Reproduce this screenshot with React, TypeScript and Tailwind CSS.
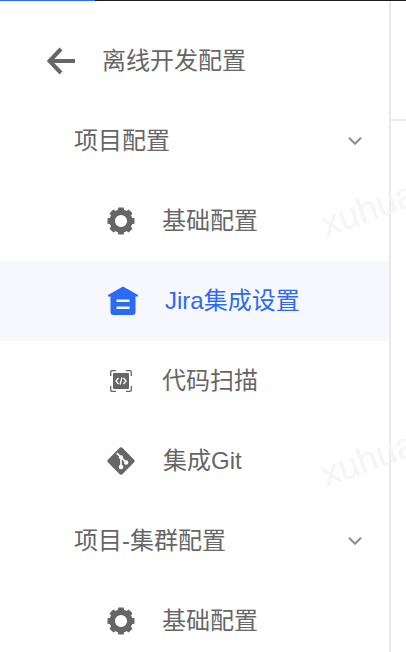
import { ChevronDown } from 'lucide-react'

const font = '[font-family:"Liberation_Sans","Noto_Sans_CJK_SC",sans-serif]'
const teeth = [0, 45, 90, 135, 180, 225, 270, 315]

function GearIcon() {
  return (
    <svg width="30" height="30" viewBox="0 0 30 30" fill="#666666">
      {teeth.map((deg) => (
        <path key={deg} d="M12.300 1.500h5.400l.8 5h-7z" transform={`rotate(${deg} 15 15)`} />
      ))}
      <circle cx="15" cy="15" r="8.800" fill="none" stroke="#666666" strokeWidth="5.400" />
    </svg>
  )
}

function HomeIcon() {
  return (
    <svg width="32" height="30" viewBox="0 0 32 30">
      <path
        fill="#2b6af5"
        fillRule="evenodd"
        d="M16 .5 31 9v1.500h-2.500V26a3 3 0 0 1-3 3h-19a3 3 0 0 1-3-3V10.500H1V9zM9.500 13.500v2.500h13v-2.500zm0 7v2.500h13v-2.500z"
      />
    </svg>
  )
}

function ScanIcon() {
  return (
    <svg width="22" height="22" viewBox="0 0 22 22" fill="none">
      <path
        stroke="#666666"
        strokeWidth="1.300"
        d="M.7 6V2A1.300 1.300 0 0 1 2 .7h4M16 .7h4A1.300 1.300 0 0 1 21.300 2v4M21.300 16v4a1.300 1.300 0 0 1-1.300 1.300h-4M6 21.300H2A1.300 1.300 0 0 1 .7 20v-4"
      />
      <rect x="3" y="3" width="16" height="16" rx="1" fill="#666666" />
      <path stroke="#ffffff" strokeWidth="1.300" d="m8.500 8-2.500 3 2.500 3M13.500 8l2.500 3-2.500 3M12 7.500l-2 7" />
    </svg>
  )
}

function GitIcon() {
  return (
    <svg width="28" height="28" viewBox="0 0 30 30">
      <path
        fill="#666666"
        d="M13.300 1.200a2.400 2.400 0 0 1 3.400 0l12.100 12.100a2.400 2.400 0 0 1 0 3.400L16.700 28.800a2.400 2.400 0 0 1-3.400 0L1.200 16.700a2.400 2.400 0 0 1 0-3.400z"
      />
      <path stroke="#ffffff" strokeWidth="1.800" fill="none" d="M10.500 6.500 15 11v11M15 11l5.500 5.500" />
      <circle cx="15" cy="11" r="2.200" fill="#ffffff" />
      <circle cx="15" cy="21.500" r="2.400" fill="#ffffff" />
      <circle cx="20.500" cy="16.500" r="2.400" fill="#ffffff" />
    </svg>
  )
}

function GroupRow({ label }: { label: string }) {
  return (
    <div className="flex h-20 items-center justify-between pl-[74px] pr-[23px]">
      <span className="text-[24px] leading-none text-[#666666]">{label}</span>
      <ChevronDown size={22} strokeWidth={2.2} className="text-[#8c8c8c]" />
    </div>
  )
}

export default function App() {
  return (
    <div className={`relative h-[652px] w-[406px] overflow-hidden bg-white ${font}`}>
      <div className="flex h-px bg-[#1c1c1c]">
        <div className="w-[95px] bg-[#2b6af5]" />
      </div>
      <div className="flex h-[651px]">
        <div className="w-[389px] shrink-0 overflow-hidden pt-5">
          <div className="flex h-20 items-center pl-[47px]">
            <svg width="30" height="30" viewBox="0 0 30 30" fill="none" stroke="#666666" strokeWidth="4" strokeLinejoin="miter">
              <path d="M28 15H4M14 3 2.500 15 14 27" />
            </svg>
            <span className="ml-[25px] text-[24px] leading-none text-[#666666]">离线开发配置</span>
          </div>
          <GroupRow label="项目配置" />
          <div className="flex h-20 items-center">
            <div className="ml-[106px]"><GearIcon /></div>
            <span className="ml-[26px] text-[24px] leading-none text-[#666666]">基础配置</span>
          </div>
          <div className="flex h-20 items-center bg-[#f6f8fe]">
            <div className="ml-[107px]"><HomeIcon /></div>
            <span className="ml-[26px] text-[24px] leading-none text-[#2b6af5]">Jira集成设置</span>
          </div>
          <div className="flex h-20 items-center">
            <div className="ml-[110px]"><ScanIcon /></div>
            <span className="ml-[30px] text-[24px] leading-none text-[#666666]">代码扫描</span>
          </div>
          <div className="flex h-20 items-center">
            <div className="ml-[107px]"><GitIcon /></div>
            <span className="ml-[28px] text-[24px] leading-none text-[#666666]">集成Git</span>
          </div>
          <GroupRow label="项目-集群配置" />
          <div className="flex h-20 items-center">
            <div className="ml-[106px]"><GearIcon /></div>
            <span className="ml-[26px] text-[24px] leading-none text-[#666666]">基础配置</span>
          </div>
        </div>
        <div className="w-[2px] shrink-0 bg-[#e8e8ee]" />
        <div className="flex-1 pt-[118px]">
          <div className="h-[2px] bg-[#e8e8ee]" />
        </div>
      </div>
      <span className="pointer-events-none absolute left-[322px] top-[208px] origin-left -rotate-[20deg] text-[36px] leading-none text-[#f5f5f5]">xuhua</span>
      <span className="pointer-events-none absolute left-[322px] top-[458px] origin-left -rotate-[20deg] text-[36px] leading-none text-[#f5f5f5]">xuhua</span>
    </div>
  )
}
